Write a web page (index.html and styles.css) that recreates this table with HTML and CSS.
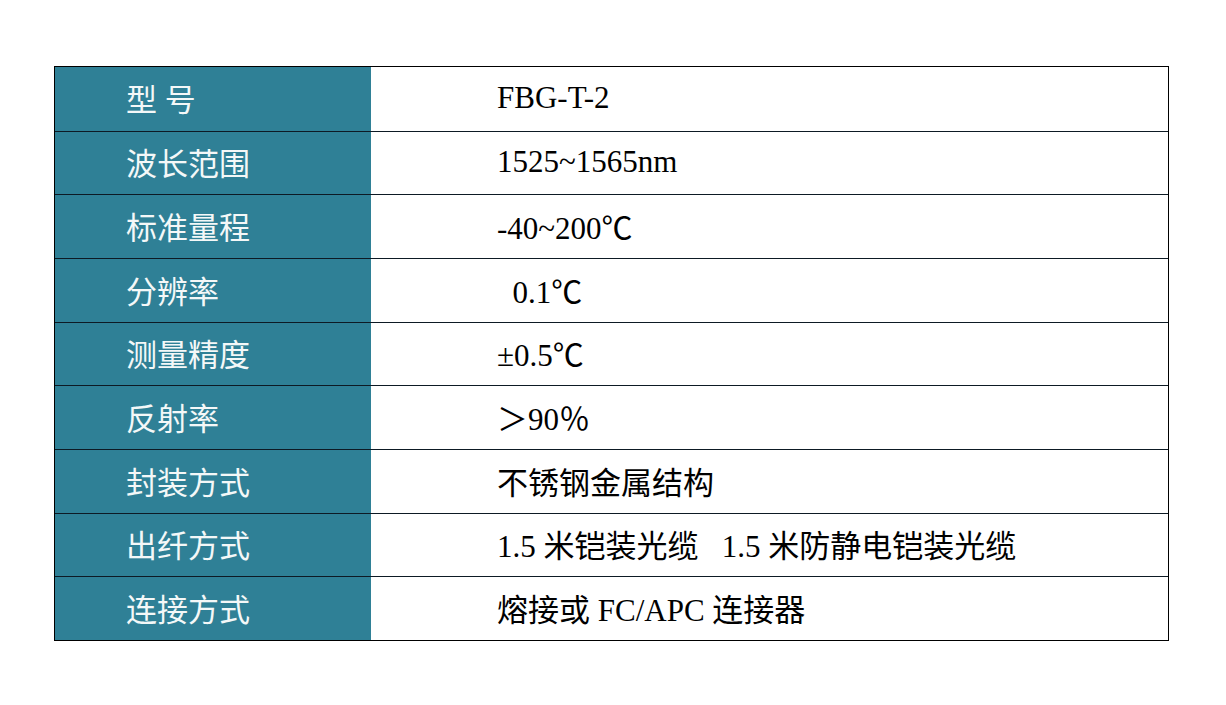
FILE: index.html
```html
<!DOCTYPE html>
<html lang="zh-CN">
<head>
<meta charset="utf-8">
<title>FBG-T-2</title>
<link rel="stylesheet" href="styles.css">
</head>
<body>
<div class="spec">
  <div class="row"><div class="label">型 号</div><div class="value">FBG-T-2</div></div>
  <div class="row"><div class="label">波长范围</div><div class="value">1525~1565nm</div></div>
  <div class="row"><div class="label">标准量程</div><div class="value">-40~200℃</div></div>
  <div class="row"><div class="label">分辨率</div><div class="value">&nbsp;&nbsp;0.1℃</div></div>
  <div class="row"><div class="label">测量精度</div><div class="value">±0.5℃</div></div>
  <div class="row"><div class="label">反射率</div><div class="value">＞90％</div></div>
  <div class="row"><div class="label">封装方式</div><div class="value">不锈钢金属结构</div></div>
  <div class="row"><div class="label">出纤方式</div><div class="value">1.5 米铠装光缆 &nbsp; 1.5 米防静电铠装光缆</div></div>
  <div class="row"><div class="label">连接方式</div><div class="value">熔接或 FC/APC 连接器</div></div>
</div>
</body>
</html>
```

FILE: styles.css
```css
html, body {
  margin: 0;
  padding: 0;
  background: #ffffff;
}

body {
  padding: 66px 0 0 54px;
  font-family: "Liberation Serif", "Noto Sans CJK SC", serif;
}

.spec {
  box-sizing: border-box;
  width: 1115px;
  height: 575px;
  border: 1px solid #000;
  display: grid;
  grid-template-rows: repeat(9, 1fr);
}

.row {
  display: grid;
  grid-template-columns: 316px 1fr;
  border-top: 1px solid #0d1a24;
}

.row:first-child {
  border-top: none;
}

.label {
  background: #2f8096;
  color: #f4f8f8;
  font-size: 31px;
  display: flex;
  align-items: center;
  padding-left: 71px;
  padding-bottom: 2px;
  white-space: pre;
}

.value {
  color: #000;
  font-size: 31px;
  display: flex;
  align-items: center;
  padding-left: 126px;
  padding-bottom: 2px;
  white-space: pre;
}
```
